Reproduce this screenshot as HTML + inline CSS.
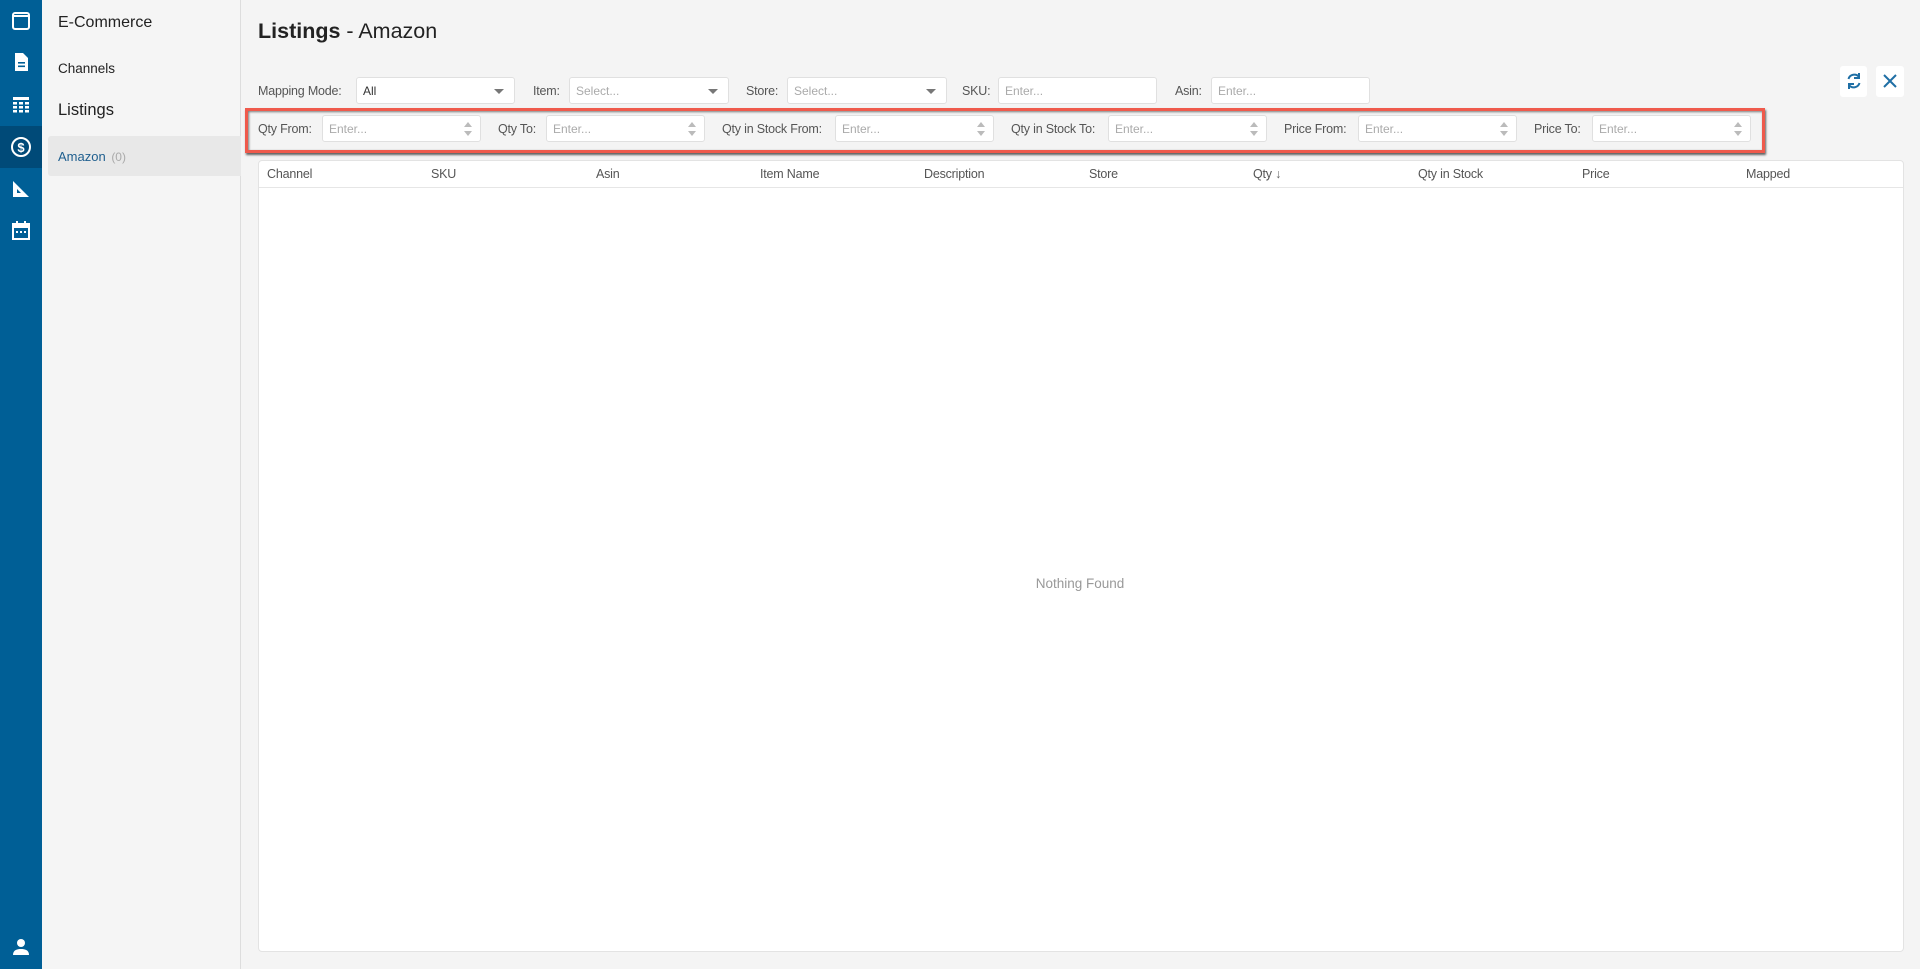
<!DOCTYPE html>
<html><head><meta charset="utf-8"><style>
*{box-sizing:border-box;margin:0;padding:0}
body{width:1920px;height:969px;overflow:hidden;background:#f4f4f4;font-family:"Liberation Sans",sans-serif;position:relative;color:#333}
.abs{position:absolute}
#side{left:0;top:0;width:42px;height:969px;background:#005f96}
#act{left:0;top:126px;width:42px;height:42px;background:#004a78}
.ic{position:absolute;left:10px;width:22px;height:22px}
#panel{left:42px;top:0;width:199px;height:969px;background:#f5f5f5;border-right:1px solid #ddd}
.lbl{position:absolute;font-size:12.5px;color:#555;line-height:16px;letter-spacing:-0.2px}
.inp{position:absolute;height:27px;background:#fff;border:1px solid #e0e0e0;border-radius:3px;font-size:12px;color:#aaa;padding:6px 6px;line-height:14px}
.sel::after{content:"";position:absolute;right:10px;top:11px;border:5px solid transparent;border-top:5px solid #777;border-bottom:0}
.spin::before{content:"";position:absolute;right:8px;top:6px;border:4px solid transparent;border-bottom:5px solid #bbb;border-top:0}
.spin::after{content:"";position:absolute;right:8px;top:15px;border:4px solid transparent;border-top:5px solid #bbb;border-bottom:0}
.th{position:absolute;top:167px;font-size:12.5px;color:#555;letter-spacing:-0.2px}
</style></head><body>
<div id="side" class="abs"></div>
<div id="act" class="abs"></div>
<svg class="ic" style="top:10px" viewBox="0 0 22 22"><rect x="3" y="3" width="16" height="16" rx="2" fill="none" stroke="#fff" stroke-width="2"/><line x1="3" y1="6" x2="19" y2="6" stroke="#fff" stroke-width="2"/></svg>
<svg class="ic" style="top:51px" viewBox="0 0 22 22"><path d="M5 2h8l5 5v13H5z" fill="#fff"/><rect x="8" y="11" width="7" height="1.6" fill="#005f96"/><rect x="8" y="14.5" width="7" height="1.6" fill="#005f96"/></svg>
<svg class="ic" style="top:93px" viewBox="0 0 22 22"><g fill="#fff"><rect x="3" y="4" width="16" height="3"/><rect x="3" y="9" width="4" height="2.5"/><rect x="9" y="9" width="4" height="2.5"/><rect x="15" y="9" width="4" height="2.5"/><rect x="3" y="13" width="4" height="2.5"/><rect x="9" y="13" width="4" height="2.5"/><rect x="15" y="13" width="4" height="2.5"/><rect x="3" y="17" width="4" height="2.5"/><rect x="9" y="17" width="4" height="2.5"/><rect x="15" y="17" width="4" height="2.5"/></g></svg>
<svg class="ic" style="top:136px" viewBox="0 0 22 22"><circle cx="11" cy="11" r="9" fill="none" stroke="#fff" stroke-width="2"/><text x="11" y="16" text-anchor="middle" font-size="13" font-family="Liberation Sans" font-weight="bold" fill="#fff">$</text></svg>
<svg class="ic" style="top:178px" viewBox="0 0 22 22"><path d="M3 3v16h16z" fill="#fff"/><path d="M7 11v4h4z" fill="#005f96"/></svg>
<svg class="ic" style="top:219px" viewBox="0 0 22 22"><rect x="3" y="5" width="16" height="15" fill="none" stroke="#fff" stroke-width="2"/><rect x="3" y="5" width="16" height="4" fill="#fff"/><rect x="6" y="2" width="2" height="4" fill="#fff"/><rect x="14" y="2" width="2" height="4" fill="#fff"/><g fill="#fff"><rect x="6" y="12" width="2" height="2"/><rect x="10" y="12" width="2" height="2"/><rect x="14" y="12" width="2" height="2"/></g></svg>
<svg class="ic" style="top:936px" viewBox="0 0 22 22"><circle cx="11" cy="7" r="4" fill="#fff"/><path d="M3 19c0-5 4-6 8-6s8 1 8 6z" fill="#fff"/></svg>
<div id="panel" class="abs"></div>
<div class="abs" style="left:58px;top:14px;font-size:16px;color:#222">E-Commerce</div>
<div class="abs" style="left:58px;top:61px;font-size:13.5px;color:#222">Channels</div>
<div class="abs" style="left:58px;top:101px;font-size:16.5px;color:#222">Listings</div>
<div class="abs" style="left:48px;top:136px;width:193px;height:40px;background:#e8e8e8;border-radius:3px 0 0 3px"></div>
<div class="abs" style="left:58px;top:149px;font-size:13px;color:#1f5f8f">Amazon <span style="color:#aaa;font-size:12px;margin-left:2px">(0)</span></div>
<div class="abs" style="left:258px;top:19px;font-size:21.5px;color:#222"><b>Listings</b> - Amazon</div>
<div class="lbl" style="left:258px;top:83px">Mapping Mode:</div>
<div class="inp sel" style="left:356px;top:77px;width:159px;color:#333">All</div>
<div class="lbl" style="left:533px;top:83px">Item:</div>
<div class="inp sel" style="left:569px;top:77px;width:160px">Select...</div>
<div class="lbl" style="left:746px;top:83px">Store:</div>
<div class="inp sel" style="left:787px;top:77px;width:160px">Select...</div>
<div class="lbl" style="left:962px;top:83px">SKU:</div>
<div class="inp" style="left:998px;top:77px;width:159px">Enter...</div>
<div class="lbl" style="left:1175px;top:83px">Asin:</div>
<div class="inp" style="left:1211px;top:77px;width:159px">Enter...</div>
<div class="abs" style="left:1840px;top:66px;width:27px;height:31px;background:#fff;border-radius:3px"></div>
<svg class="abs" style="left:1844px;top:71px" width="20" height="20" viewBox="0 0 20 20"><path d="M15 6A6 6 0 0 0 4.5 8" fill="none" stroke="#1f6fa5" stroke-width="2"/><path d="M15 2v5h-5" fill="none" stroke="#1f6fa5" stroke-width="2"/><path d="M5 14a6 6 0 0 0 10.5-2" fill="none" stroke="#1f6fa5" stroke-width="2"/><path d="M5 18v-5h5" fill="none" stroke="#1f6fa5" stroke-width="2"/></svg>
<div class="abs" style="left:1876px;top:66px;width:28px;height:31px;background:#fff;border-radius:3px"></div>
<svg class="abs" style="left:1883px;top:74px" width="14" height="14" viewBox="0 0 14 14"><path d="M1 1l12 12M13 1L1 13" stroke="#1f6fa5" stroke-width="2"/></svg>
<div class="abs" style="left:245px;top:108px;width:1520px;height:45px;border:3px solid #ef5a4c;box-shadow:1px 2px 2px rgba(0,0,0,.6), inset 1px 1px 2px rgba(0,0,0,.5)"></div>
<div class="lbl" style="left:258px;top:121px">Qty From:</div>
<div class="inp spin" style="left:322px;top:115px;width:159px">Enter...</div>
<div class="lbl" style="left:498px;top:121px">Qty To:</div>
<div class="inp spin" style="left:546px;top:115px;width:159px">Enter...</div>
<div class="lbl" style="left:722px;top:121px">Qty in Stock From:</div>
<div class="inp spin" style="left:835px;top:115px;width:159px">Enter...</div>
<div class="lbl" style="left:1011px;top:121px">Qty in Stock To:</div>
<div class="inp spin" style="left:1108px;top:115px;width:159px">Enter...</div>
<div class="lbl" style="left:1284px;top:121px">Price From:</div>
<div class="inp spin" style="left:1358px;top:115px;width:159px">Enter...</div>
<div class="lbl" style="left:1534px;top:121px">Price To:</div>
<div class="inp spin" style="left:1592px;top:115px;width:159px">Enter...</div>
<div class="abs" style="left:258px;top:160px;width:1646px;height:792px;background:#fff;border:1px solid #e3e3e3;border-radius:4px"></div>
<div class="abs" style="left:259px;top:187px;width:1644px;height:1px;background:#e6e6e6"></div>
<div class="th" style="left:267px">Channel</div>
<div class="th" style="left:431px">SKU</div>
<div class="th" style="left:596px">Asin</div>
<div class="th" style="left:760px">Item Name</div>
<div class="th" style="left:924px">Description</div>
<div class="th" style="left:1089px">Store</div>
<div class="th" style="left:1253px">Qty <span style="color:#666">&#8595;</span></div>
<div class="th" style="left:1418px">Qty in Stock</div>
<div class="th" style="left:1582px">Price</div>
<div class="th" style="left:1746px">Mapped</div>
<div class="abs" style="left:980px;top:576px;width:200px;text-align:center;font-size:13.5px;color:#999">Nothing Found</div>
</body></html>
